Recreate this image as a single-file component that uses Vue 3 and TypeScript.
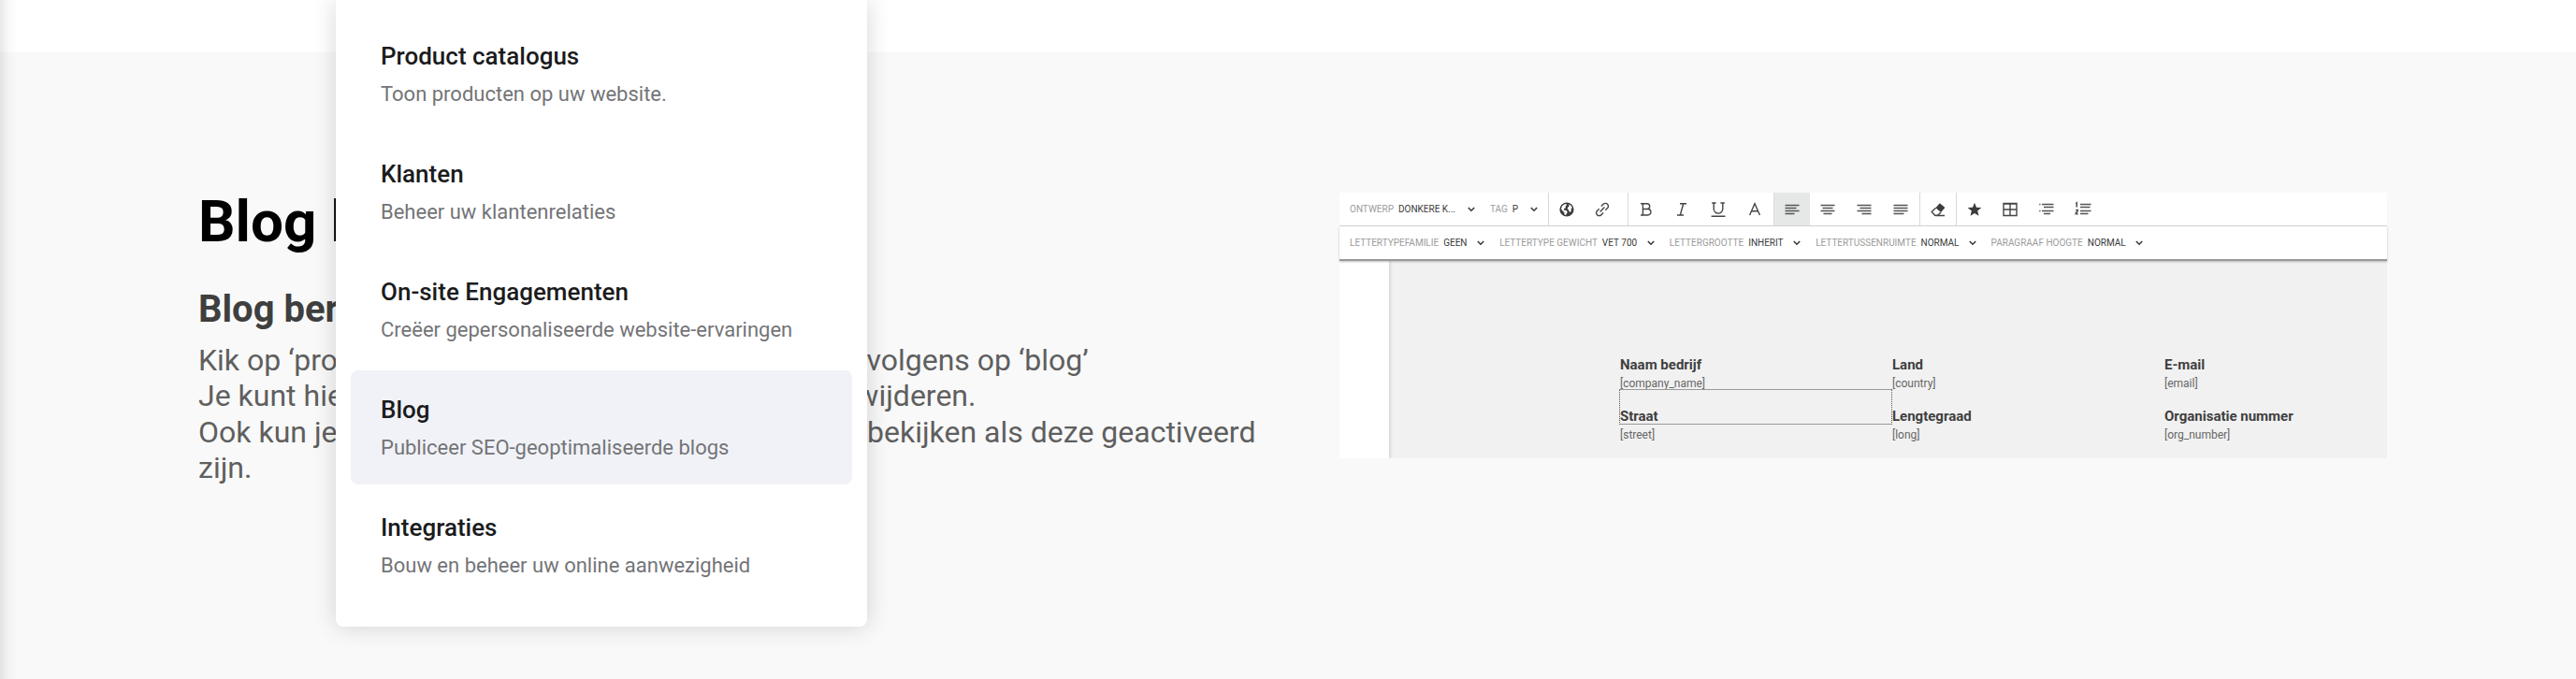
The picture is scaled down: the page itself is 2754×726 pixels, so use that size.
<script setup lang="ts">
interface MenuItem {
  title: string
  text: string
  active?: boolean
}

interface Setting {
  id: string
  label: string
  value: string
}

interface Tool {
  name: string
  icon: string
  start?: boolean
  gap?: boolean
  active?: boolean
}

interface Field {
  label: string
  token: string
  selected?: boolean
}

const menu: MenuItem[] = [
  { title: 'Product catalogus', text: 'Toon producten op uw website.' },
  { title: 'Klanten', text: 'Beheer uw klantenrelaties' },
  { title: 'On-site Engagementen', text: 'Creëer gepersonaliseerde website-ervaringen' },
  { title: 'Blog', text: 'Publiceer SEO-geoptimaliseerde blogs', active: true },
  { title: 'Integraties', text: 'Bouw en beheer uw online aanwezigheid' },
]

const blockSettings: Setting[] = [
  { id: 'design', label: 'ONTWERP', value: 'DONKERE K...' },
  { id: 'tag', label: 'TAG', value: 'P' },
]

const fontSettings: Setting[] = [
  { id: 'family', label: 'LETTERTYPEFAMILIE', value: 'GEEN' },
  { id: 'weight', label: 'LETTERTYPE GEWICHT', value: 'VET 700' },
  { id: 'size', label: 'LETTERGROOTTE', value: 'INHERIT' },
  { id: 'spacing', label: 'LETTERTUSSENRUIMTE', value: 'NORMAL' },
  { id: 'height', label: 'PARAGRAAF HOOGTE', value: 'NORMAL' },
]

const tools: Tool[] = [
  { name: 'Taal', icon: 'globe', start: true },
  { name: 'Link', icon: 'link', gap: true },
  { name: 'Vet', icon: 'bold', start: true },
  { name: 'Cursief', icon: 'italic' },
  { name: 'Onderstrepen', icon: 'underline' },
  { name: 'Tekstkleur', icon: 'color' },
  { name: 'Links uitlijnen', icon: 'left', start: true, active: true },
  { name: 'Centreren', icon: 'center' },
  { name: 'Rechts uitlijnen', icon: 'right' },
  { name: 'Uitvullen', icon: 'justify' },
  { name: 'Opmaak wissen', icon: 'eraser', start: true },
  { name: 'Pictogram', icon: 'star', start: true },
  { name: 'Tabel', icon: 'table' },
  { name: 'Lijst', icon: 'list' },
  { name: 'Genummerde lijst', icon: 'numbers' },
]

const fields: Field[] = [
  { label: 'Naam bedrijf', token: '[company_name]' },
  { label: 'Land', token: '[country]' },
  { label: 'E-mail', token: '[email]' },
  { label: 'Straat', token: '[street]', selected: true },
  { label: 'Lengtegraad', token: '[long]' },
  { label: 'Organisatie nummer', token: '[org_number]' },
]

const glyphs: Record<string, string> = {
  globe:
    'M8 .4a7.600 7.600 0 1 0 0 15.200A7.600 7.600 0 0 0 8 .4zM5.200 2.400L7.600 2l.2 1.600-1.300 1.200.4 1.400-1.700.9-.5 1.300 2.600.6 1.500 1.500-.8 1.600-.9 1.900-1.500-.6-.3-2.400L3.600 9.600 2 7.200a6.200 6.200 0 0 1 3.200-4.800zM10.200 2.300a6 6 0 0 1 3.700 4l-1.500.9.600 1.500-1 2.100-1.300-.4-.5-2-1.400-.6.300-2.100 1.600-1.200z',
  star: 'M8 .8l2 4.900 5.300.4-4.100 3.400 1.300 5.200L8 11.900l-4.500 2.800 1.300-5.200L.7 6.100 6 5.700z',
}

const strokes: Record<string, string> = {
  link: 'M6.800 4.600l2.300-2.300a3 3 0 0 1 4.400 0a3 3 0 0 1 0 4.300l-2.200 2.200M9.200 11.400l-2.300 2.300a3 3 0 0 1-4.400 0a3 3 0 0 1 0-4.300l2.200-2.200M5.600 10.400l4.800-4.800',
  bold: 'M2 1.700h6.800a2.900 2.900 0 0 1 0 5.800H4.400M8.800 7.500h.9a3.200 3.200 0 0 1 0 6.500H2M4.400 1.700V14',
  italic: 'M6 1.700h7M3 14h7M9.700 1.700L6.300 14',
  underline: 'M1.200 1h4.400M10.400 1h4.400M3.200 1v6.300a4.800 4.800 0 0 0 9.600 0V1M.6 15.300h14.800',
  color: 'M2.600 14L8 1.800L13.400 14M4.600 9.800h6.800',
  table: 'M1 1.500h14v13H1zM1 2h14M8 1.500v13M1 8h14',
}

const lines: Record<string, string> = {
  left: 'M.5 3.500h15M.5 6.500h12M.5 9.500h15M.5 12.500h10',
  center: 'M.5 3.500h15M2.500 6.500h11M.5 9.500h15M3.500 12.500h9',
  right: 'M.5 3.500h15M3.500 6.500h12M.5 9.500h15M5.500 12.500h10',
  justify: 'M.5 3.500h15M.5 6.500h15M.5 9.500h15M.5 12.500h11',
  list: 'M3 2.500h12.500M5 5.500h10.500M3 9.500h12.500M5 12.500h7M.2 2.500h1.300M.2 9.500h1.300',
  numbers: 'M5 2.500h11.500M5 5.500h10.500M5 9.500h11.500M5 12.500h8.500M.2 1.800l1-.8v4.500M.2 8.600h2v1.200l-2 2.200v.6h2.400',
}
</script>

<template>
  <div class="page">
    <header class="strip"></header>

    <nav class="menu" aria-label="Modules">
      <a
        v-for="item in menu"
        :key="item.title"
        href="#"
        class="menu-item"
        :class="{ active: item.active }"
      >
        <span class="menu-title">{{ item.title }}</span>
        <span class="menu-text">{{ item.text }}</span>
      </a>
    </nav>

    <main class="section">
      <article class="copy">
        <h1>Blog berichten</h1>
        <h2>Blog berichten aanmaken</h2>
        <p>
          Kik op ‘producten’ in het navigatiemenu en kies vervolgens op ‘blog’<br />
          Je kunt hier berichten aanmaken, bewerken of verwijderen.<br />
          Ook kun je via elke blog de reacties of statistieken bekijken als deze geactiveerd zijn.
        </p>
      </article>

      <div class="preview">
        <div class="editor">
          <div class="bar upper">
            <div class="settings">
              <div v-for="s in blockSettings" :key="s.id" class="setting">
                <label :for="s.id">{{ s.label }}</label>
                <select :id="s.id">
                  <option>{{ s.value }}</option>
                </select>
                <svg class="chevron" viewBox="0 0 8 6" aria-hidden="true">
                  <path d="M.8 1L4 4.200L7.200 1" />
                </svg>
              </div>
            </div>
            <div class="tools">
              <button
                v-for="tool in tools"
                :key="tool.name"
                type="button"
                class="tool"
                :class="{ start: tool.start, gap: tool.gap, active: tool.active }"
                :aria-label="tool.name"
              >
                <svg viewBox="0 0 16 16" aria-hidden="true">
                  <template v-if="tool.icon === 'eraser'">
                    <path class="fill" d="M9.800 1.200l5.600 4.900-4.300 5-5.700-4.900z" />
                    <path class="line" d="M5.600 6.300L1.200 10.500l3.400 3.700h3l3.400-3.300M5 14.500h10" />
                  </template>
                  <path
                    v-else-if="glyphs[tool.icon]"
                    class="fill"
                    :d="glyphs[tool.icon]"
                    fill-rule="evenodd"
                  />
                  <path v-else-if="lines[tool.icon]" class="line soft" :d="lines[tool.icon]" />
                  <path v-else class="line" :d="strokes[tool.icon]" />
                </svg>
              </button>
            </div>
          </div>
          <div class="bar lower">
            <div class="settings">
              <div v-for="s in fontSettings" :key="s.id" class="setting">
                <label :for="s.id">{{ s.label }}</label>
                <select :id="s.id">
                  <option>{{ s.value }}</option>
                </select>
                <svg class="chevron" viewBox="0 0 8 6" aria-hidden="true">
                  <path d="M.8 1L4 4.200L7.200 1" />
                </svg>
              </div>
            </div>
          </div>
          <div class="canvas">
            <aside class="rail"></aside>
            <dl class="fields">
              <div v-for="f in fields" :key="f.label" class="field" :class="{ selected: f.selected }">
                <dt>{{ f.label }}</dt>
                <dd>{{ f.token }}</dd>
              </div>
            </dl>
          </div>
        </div>
      </div>
    </main>
  </div>
</template>

<style>
body {
  margin: 0;
  background: #f9f9f9;
}
</style>

<style scoped>
.page {
  position: relative;
  min-height: 100vh;
  overflow: hidden;
  background: #f9f9f9;
  font-family: Roboto, 'Liberation Sans', sans-serif;
}

.page::before {
  content: '';
  position: absolute;
  z-index: 1;
  top: 0;
  bottom: 0;
  left: 0;
  width: 20px;
  background: linear-gradient(90deg, rgba(0, 0, 0, 0.09), rgba(0, 0, 0, 0.02) 50%, transparent);
}

.strip {
  height: 56px;
  background: #fff;
}

.menu {
  position: absolute;
  z-index: 2;
  top: 0;
  left: 359px;
  display: flex;
  flex-direction: column;
  gap: 4px;
  box-sizing: border-box;
  width: 568px;
  padding: 18px 16px 26px;
  border-radius: 0 0 8px 8px;
  background: #fff;
  box-shadow: 0 0 26px rgba(0, 0, 0, 0.16);
}

.menu-item {
  display: flex;
  flex-direction: column;
  gap: 13px;
  padding: 27px 32px 26px;
  border-radius: 8px;
  text-decoration: none;
}

.menu-item.active {
  background: #f1f2f7;
}

.menu-title {
  color: #1b1b1d;
  font-size: 26px;
  font-weight: 500;
  line-height: 30px;
}

.menu-text {
  color: #737477;
  font-size: 22px;
  line-height: 26px;
}

.section {
  display: grid;
  grid-template-columns: 1fr 1fr;
  padding: 150px 202px 0;
}

.copy {
  padding: 0 10px;
}

h1,
h2,
p,
dl,
dd {
  margin: 0;
}

h1 {
  color: #000;
  font-size: 62px;
  font-weight: 700;
  line-height: 62px;
}

h2 {
  margin-top: 40px;
  color: #3f3f3f;
  font-size: 40px;
  font-weight: 700;
  line-height: 46px;
}

p {
  margin-top: 12px;
  color: #5f5f5f;
  font-size: 32px;
  line-height: 1.2;
}

.preview {
  padding-left: 55px;
}

.editor {
  background: #f1f1f1;
}

.bar {
  position: relative;
  z-index: 1;
  display: flex;
  height: 35px;
  border-bottom: 1px solid #d3d3d3;
  background: #fff;
}

.bar.lower {
  border-bottom: 2px solid #999;
  box-shadow: 0 1px 2px rgba(0, 0, 0, 0.25);
}

.settings {
  display: flex;
  align-items: center;
  padding-left: 11px;
}

.setting {
  position: relative;
  display: flex;
  align-items: center;
  gap: 5px;
  padding-right: 34px;
}

.upper .setting {
  padding-right: 36px;
}

.upper .setting:last-child {
  padding-right: 31px;
}

.setting label {
  color: #9b9b9b;
  font-size: 10px;
  line-height: 12px;
}

.setting select {
  margin: 0;
  padding: 0;
  border: 0;
  background: transparent;
  color: #3a3a3a;
  font-family: inherit;
  font-size: 10px;
  line-height: 12px;
  appearance: none;
}

.chevron {
  position: absolute;
  right: 16px;
  width: 8px;
  height: 6px;
  fill: none;
  stroke: #3a3a3a;
  stroke-width: 1.6;
}

.upper .setting:last-child .chevron {
  right: 11px;
}

.tools {
  display: flex;
}

.tool {
  display: flex;
  align-items: center;
  justify-content: center;
  box-sizing: border-box;
  width: 39px;
  padding: 0;
  border: 0;
  background: transparent;
}

.tool.start {
  border-left: 1px solid #d9d9d9;
}

.tool.gap {
  margin-right: 7px;
}

.tool.active {
  background: #e6e7e7;
}

.tool svg {
  width: 16px;
  height: 16px;
  overflow: visible;
}

.fill {
  fill: #3c3c3c;
}

.line {
  fill: none;
  stroke: #444;
  stroke-width: 1.4;
}

.soft {
  stroke: #555;
  stroke-width: 1.6;
}

.canvas {
  display: flex;
}

.rail {
  width: 53px;
  background: #fff;
  box-shadow: 1px 0 4px rgba(0, 0, 0, 0.15);
  clip-path: inset(0 -8px 0 0);
}

.fields {
  display: grid;
  flex: 1;
  grid-template-columns: 291fr 291fr 238fr;
  row-gap: 18px;
  padding: 102px 0 17px 247px;
}

.field {
  position: relative;
}

.field.selected::before {
  content: '';
  position: absolute;
  inset: -20px 0 19px -1px;
  border: 1px solid #999;
  border-right: 1px dotted #555;
  border-left: 1px dotted #555;
}

dt {
  color: #3f3f3f;
  font-size: 15px;
  font-weight: 700;
  line-height: 18px;
}

dd {
  margin-top: 3px;
  color: #666;
  font-size: 12px;
  line-height: 16px;
}
</style>
